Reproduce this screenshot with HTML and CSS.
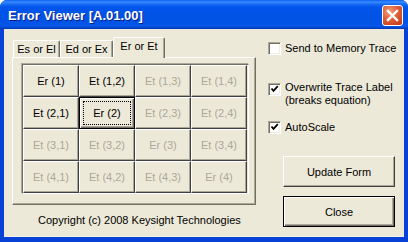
FILE: index.html
```html
<!DOCTYPE html>
<html>
<head>
<meta charset="utf-8">
<link rel="stylesheet" href="styles.css">
</head>
<body>
<div class="window">
  <div class="titlebar">
    <span class="title">Error Viewer [A.01.00]</span>
    <div class="close-x">
      <svg width="13" height="13" viewBox="0 0 13 13"><path d="M2 2 L11 11 M11 2 L2 11" stroke="#fff" stroke-width="2.4" stroke-linecap="square"/></svg>
    </div>
  </div>
  <div class="client">
    <div class="left">
      <div class="tabs">
        <div class="tab t1">Es or El</div>
        <div class="tab t2">Ed or Ex</div>
        <div class="tab t3 active">Er or Et</div>
      </div>
      <div class="panel">
        <div class="grid">
          <div class="cell">Er (1)</div>
          <div class="cell">Et (1,2)</div>
          <div class="cell dis">Et (1,3)</div>
          <div class="cell dis">Et (1,4)</div>
          <div class="cell">Et (2,1)</div>
          <div class="cell sel"><span class="focus">Er (2)</span></div>
          <div class="cell dis">Et (2,3)</div>
          <div class="cell dis">Et (2,4)</div>
          <div class="cell dis">Et (3,1)</div>
          <div class="cell dis">Et (3,2)</div>
          <div class="cell dis">Er (3)</div>
          <div class="cell dis">Et (3,4)</div>
          <div class="cell dis">Et (4,1)</div>
          <div class="cell dis">Et (4,2)</div>
          <div class="cell dis">Et (4,3)</div>
          <div class="cell dis">Er (4)</div>
        </div>
      </div>
      <div class="copyright">Copyright (c) 2008 Keysight Technologies</div>
    </div>
    <div class="right">
      <div class="check c1"><span class="box"></span><span class="lbl">Send to Memory Trace</span></div>
      <div class="check c2"><span class="box"><svg width="9" height="9" viewBox="0 0 9 9"><path d="M1.5 3.5 L3.5 5.8 L7.8 1.2" stroke="#000" stroke-width="1.8" fill="none"/></svg></span><span class="lbl">Overwrite Trace Label<br>(breaks equation)</span></div>
      <div class="check c3"><span class="box"><svg width="9" height="9" viewBox="0 0 9 9"><path d="M1.5 3.5 L3.5 5.8 L7.8 1.2" stroke="#000" stroke-width="1.8" fill="none"/></svg></span><span class="lbl">AutoScale</span></div>
      <div class="btn b1">Update Form</div>
      <div class="btn b2 default">Close</div>
    </div>
  </div>
</div>
</body>
</html>
```

FILE: styles.css
```css
html, body { margin: 0; padding: 0; background: #fff; }
body { font-family: "Liberation Sans", Arial, sans-serif; font-size: 11px; }
.window {
  width: 408px; height: 242px; display: flex; flex-direction: column;
  border-radius: 7px 7px 0 0; overflow: hidden; background: #0841d6;
}
.titlebar {
  height: 29px; flex: none; display: flex; align-items: center; justify-content: space-between;
  background: linear-gradient(to bottom, #0a5ff5 0, #3a8cff 2px, #1d6ff5 4px, #0055ea 7px, #0153e6 16px, #0153e6 22px, #0458e9 26px, #0242c8 28px, #0535b8 29px);
  padding: 0 5px 0 8px;
}
.title {
  color: #fff; font-family: "Liberation Sans", Arial, sans-serif; font-weight: bold; font-size: 13px;
  text-shadow: 1px 1px 0 #0a1e8a; margin-top: 1px;
}
.close-x {
  width: 19px; height: 19px; border: 1px solid #fff; border-radius: 3px;
  background: radial-gradient(circle at 35% 30%, #f0a080 0, #e0663f 40%, #cc4220 80%, #b83418 100%);
  display: flex; align-items: center; justify-content: center; margin-top: 2px;
}
.client {
  flex: 1; display: flex; background: #ece9d8;
  margin: 0 4px 5px 4px; padding: 8px 0 0 8px;
  box-shadow: inset 0 -1px 0 #f4f2e8;
}
.left { width: 244px; display: flex; flex-direction: column; }
.tabs { display: flex; height: 20px; align-items: flex-end; padding-left: 1px; }
.tab {
  height: 17px; box-sizing: border-box; border-top: 1px solid #fff; border-left: 1px solid #fff;
  border-right: 1px solid #716f64; box-shadow: inset -1px 0 0 #aca899;
  border-radius: 2px 2px 0 0; text-align: center; line-height: 16px;
}
.t1 { width: 47px; }
.t2 { width: 53px; }
.t3.active {
  width: 52px; height: 21px; margin-bottom: -1px; position: relative; z-index: 1;
  background: #ece9d8; line-height: 16px;
}
.panel {
  height: 148px; box-sizing: border-box;
  border-top: 1px solid #fff; border-left: 1px solid #fff;
  border-right: 1px solid #716f64; border-bottom: 1px solid #716f64;
  box-shadow: inset -1px -1px 0 #aca899;
  padding: 6px 0 0 9px;
}
.grid {
  display: grid; grid-template-columns: repeat(4, 56px); grid-template-rows: repeat(4, 32px);
  width: 225px; border-left: 1px solid #716f64; border-top: 1px solid #716f64;
  border-right: 1px solid #fff; border-bottom: 1px solid #fff; box-shadow: -1px -1px 0 #aca899;
}
.cell {
  box-sizing: border-box; border-top: 1px solid #fff; border-left: 1px solid #fff;
  border-right: 1px solid #404040; border-bottom: 1px solid #404040;
  box-shadow: inset -1px -1px 0 #aca899;
  display: flex; align-items: center; justify-content: center; color: #000;
}
.cell.dis { color: #aca899; }
.cell.sel {
  border: 1px solid #000;
  box-shadow: inset 1px 1px 0 #fff, inset -1px -1px 0 #716f64, inset -2px -2px 0 #aca899;
}
.focus {
  width: 48px; height: 24px; box-sizing: border-box; border: 1px dotted #000;
  display: flex; align-items: center; justify-content: center;
}
.copyright { margin-top: 9px; padding-left: 26px; line-height: 13px; }
.right { margin-left: 12px; padding-top: 5px; display: flex; flex-direction: column; }
.check { display: flex; align-items: flex-start; line-height: 13px; }
.box {
  width: 13px; height: 13px; box-sizing: border-box; flex: none; background: #fff;
  border-top: 1px solid #aca899; border-left: 1px solid #aca899;
  border-right: 1px solid #fff; border-bottom: 1px solid #fff;
  box-shadow: inset 1px 1px 0 #716f64, inset -1px -1px 0 #f1efe2;
  display: flex; align-items: center; justify-content: center; margin-right: 4px;
}
.c2 { margin-top: 26px; }
.c2 .box { margin-top: 2px; }
.c3 { margin-top: 14px; }
.btn {
  width: 112px; height: 31px; box-sizing: border-box; margin-left: 15px;
  border-top: 1px solid #fff; border-left: 1px solid #fff;
  border-right: 1px solid #404040; border-bottom: 1px solid #404040;
  box-shadow: inset -1px -1px 0 #aca899;
  display: flex; align-items: center; justify-content: center;
}
.b1 { margin-top: 22px; }
.b2 { margin-top: 9px; }
.btn.default {
  border: 1px solid #000;
  box-shadow: inset 1px 1px 0 #fff, inset -1px -1px 0 #716f64, inset -2px -2px 0 #aca899;
}
```
